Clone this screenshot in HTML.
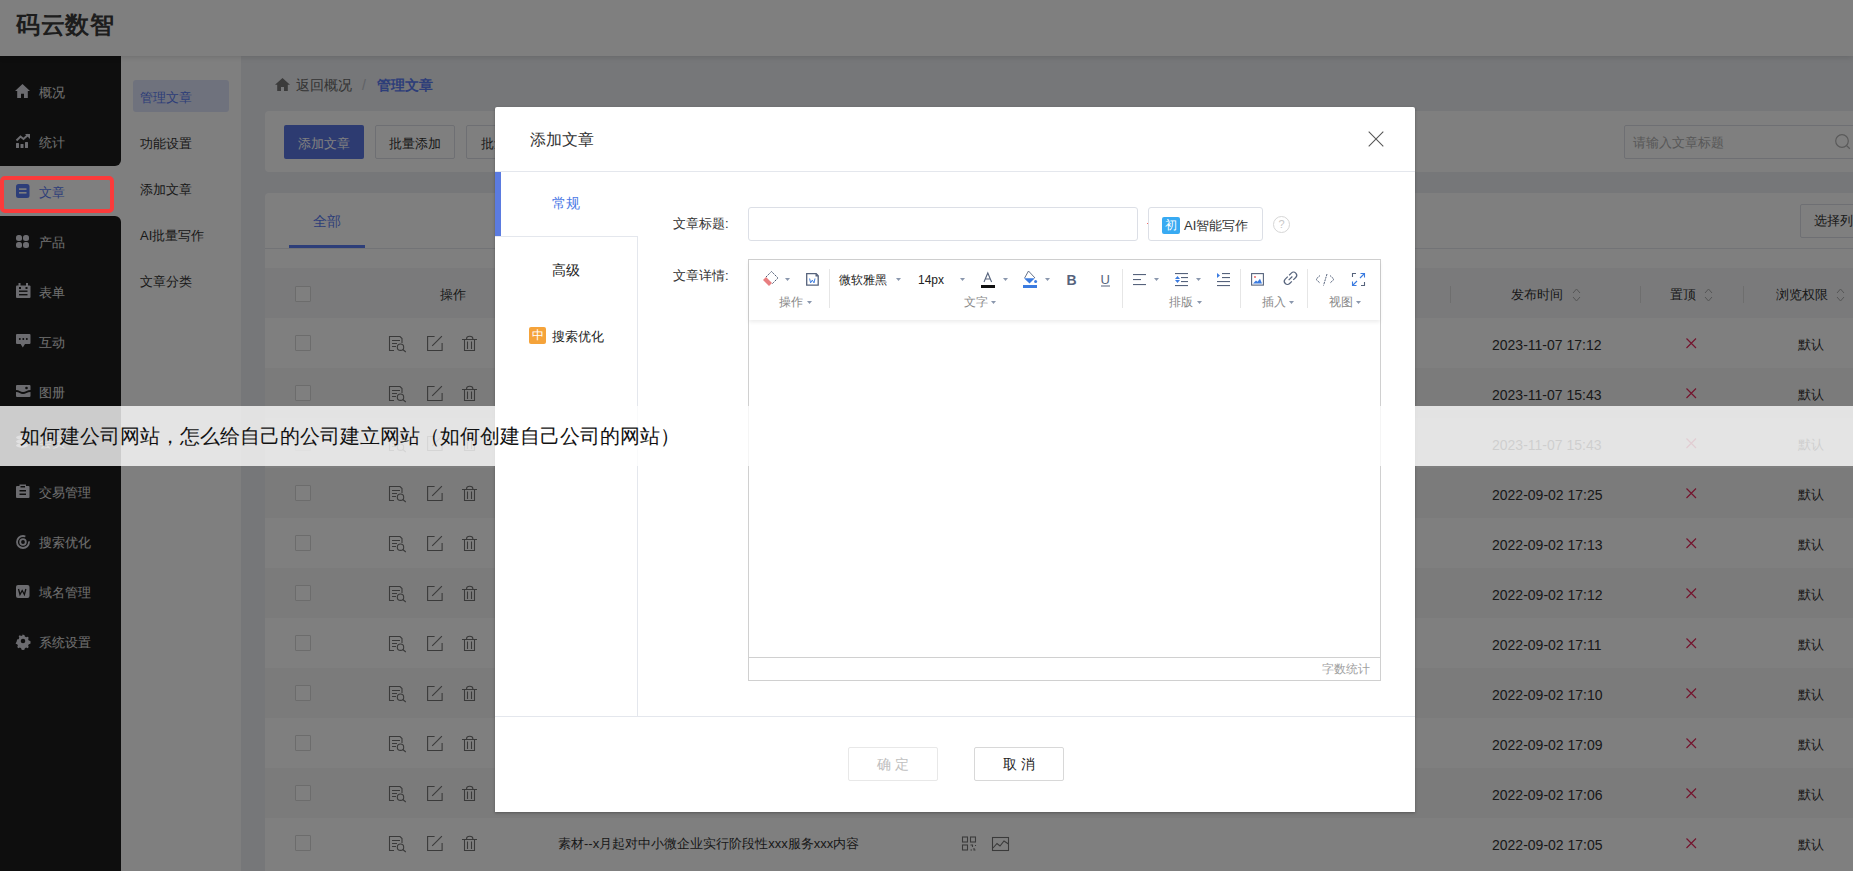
<!DOCTYPE html>
<html><head><meta charset="utf-8">
<style>
*{margin:0;padding:0;box-sizing:border-box}
html,body{width:1853px;height:871px;overflow:hidden}
body{position:relative;background:#eceef2;font-family:"Liberation Sans",sans-serif;color:#333;font-size:13px}
.a{position:absolute;white-space:nowrap}
#hdr{left:0;top:0;width:1853px;height:56px;background:#fff;box-shadow:0 1px 6px rgba(0,0,0,.14);z-index:2}
#hdr .t{left:16px;top:9px;font-size:24px;font-weight:bold;color:#3a3a3a;line-height:32px;letter-spacing:0.5px}
#sb{left:0;top:56px;width:121px;height:815px;background:#fff}
#sbA{left:0;top:56px;width:121px;height:110px;background:#1c1c1c;border-bottom-right-radius:6px}
#sbB{left:0;top:216px;width:121px;height:655px;background:#1c1c1c;border-top-right-radius:6px}
.si{left:39px;font-size:13px;color:#e6e6e6;line-height:20px}
.sic{left:16px;width:14px;height:14px}
#sb2{left:121px;top:56px;width:120px;height:815px;background:#fff}
.s2{left:140px;font-size:13px;color:#333;line-height:20px}
#card1{left:265px;top:111px;width:1620px;height:61px;background:#fff;border-radius:4px}
#card2{left:265px;top:193px;width:1620px;height:700px;background:#fff;border-radius:4px}
.btn{height:34px;border:1px solid #dcdfe6;border-radius:2px;background:#fff;font-size:13px;line-height:32px;text-align:center;color:#333}
#mask{z-index:3;left:0;top:0;width:1853px;height:871px;background:rgba(0,0,0,.5)}
#modal{z-index:3;left:495px;top:107px;width:920px;height:705px;background:#fff;border-radius:2px 2px 0 0;box-shadow:0 1px 3px rgba(0,0,0,.3)}
#banner{z-index:3;left:0;top:406px;width:1853px;height:60px;background:rgba(255,255,255,.79)}
#banner .t{left:20px;top:16px;font-size:20px;line-height:28px;color:#111;font-weight:500}
#redbox{z-index:3;left:0;top:176px;width:114px;height:37px;border:4px solid #fb3b3b;border-radius:5px}
</style></head>
<body>
<div id="hdr" class="a"><div class="a t">码云数智</div></div>
<div id="sb" class="a"></div>
<div id="sbA" class="a"></div>
<div id="sbB" class="a"></div>
<div id="sb2" class="a"></div>
<!--PAGE-->
<div class="a si" style="top:83px;color:#e0e0e0">概况</div>
<div class="a si" style="top:133px;color:#e0e0e0">统计</div>
<div class="a si" style="top:183px;color:#5b7cf2">文章</div>
<div class="a si" style="top:233px;color:#e0e0e0">产品</div>
<div class="a si" style="top:283px;color:#e0e0e0">表单</div>
<div class="a si" style="top:333px;color:#e0e0e0">互动</div>
<div class="a si" style="top:383px;color:#e0e0e0">图册</div>
<div class="a si" style="top:433px;color:#e0e0e0">会员</div>
<div class="a si" style="top:483px;color:#e0e0e0">交易管理</div>
<div class="a si" style="top:533px;color:#e0e0e0">搜索优化</div>
<div class="a si" style="top:583px;color:#e0e0e0">域名管理</div>
<div class="a si" style="top:633px;color:#e0e0e0">系统设置</div>
<svg class="a" style="left:0;top:0" width="121" height="871" viewBox="0 0 121 871"><path d="M22.5 84L15 91h2.2v7h3.8v-4.2h3v4.2h3.8v-7H30z" fill="#d8d8e0"/><g fill="#d8d8e0"><rect x="16" y="143" width="3" height="5" rx=".5"/><rect x="20.5" y="144" width="3" height="4" rx=".5"/><rect x="25" y="142" width="3" height="6" rx=".5"/></g><path d="M16.5 140.5l4-4l3 2.5l5-4.5" stroke="#d8d8e0" stroke-width="2" fill="none"/><path d="M25 134h5v5z" fill="#d8d8e0"/><rect x="16" y="184" width="13.5" height="14" rx="2.5" fill="#5b7cf2"/><g fill="#fff"><rect x="19" y="188.3" width="7.5" height="1.6"/><rect x="19" y="192" width="7.5" height="1.6"/></g><g fill="#d8d8e0"><rect x="16" y="235" width="6" height="6" rx="2.5"/><rect x="23" y="235" width="6" height="6" rx="2.5"/><rect x="16" y="242" width="6" height="6" rx="2.5"/><rect x="23" y="242" width="6" height="6" rx="2.5"/></g><path d="M17 285.5h12.5a1 1 0 0 1 1 1v10.5a1 1 0 0 1-1 1H17a1 1 0 0 1-1-1V286.5a1 1 0 0 1 1-1z" fill="#d8d8e0"/><g fill="#1c1c1c"><rect x="19" y="287" width="2" height="2"/><rect x="25.5" y="287" width="2" height="2"/><rect x="19" y="290.5" width="8.5" height="1.4"/><rect x="19" y="294" width="8.5" height="1.4"/></g><g fill="#d8d8e0"><rect x="18.5" y="283" width="2" height="3.5"/><rect x="26" y="283" width="2" height="3.5"/></g><path d="M17 334h12.5a1 1 0 0 1 1 1v8a1 1 0 0 1-1 1h-4.5l-2.2 3.5l-2.2-3.5H17a1 1 0 0 1-1-1v-8a1 1 0 0 1 1-1z" fill="#d8d8e0"/><g fill="#1c1c1c"><circle cx="19.8" cy="339" r="1"/><circle cx="23.3" cy="339" r="1"/><circle cx="26.8" cy="339" r="1"/></g><path d="M17 385h12.5a1 1 0 0 1 1 1v4c-3 0-5 2-7.5 2S19 390 16 390v-4a1 1 0 0 1 1-1zM16 392c3 0 4.5 2 7 2s4.5-2 7.5-2v4a1 1 0 0 1-1 1H17a1 1 0 0 1-1-1z" fill="#d8d8e0"/><circle cx="26.5" cy="388" r="1.3" fill="#1c1c1c"/><g fill="#d8d8e0"><ellipse cx="22" cy="437.5" rx="6" ry="2.2"/><ellipse cx="22" cy="441.5" rx="6" ry="2.2"/><ellipse cx="22" cy="445.5" rx="6" ry="2.2"/></g><path d="M17 486h2.5v-1.5h6.5v1.5h2.5a1 1 0 0 1 1 1v10a1 1 0 0 1-1 1H17a1 1 0 0 1-1-1v-10a1 1 0 0 1 1-1z" fill="#d8d8e0"/><g fill="#1c1c1c"><rect x="19.5" y="490" width="6.5" height="1.5"/><rect x="19.5" y="493.5" width="6.5" height="1.5"/><rect x="20.5" y="486" width="4.5" height="1.5"/></g><circle cx="23" cy="542" r="6" fill="none" stroke="#d8d8e0" stroke-width="1.8" stroke-dasharray="30 6"/><circle cx="23" cy="542" r="2.8" fill="none" stroke="#d8d8e0" stroke-width="1.8"/><rect x="16" y="585" width="13.5" height="13" rx="2" fill="#d8d8e0"/><path d="M18.5 589l1.5 5.5l2.2-4l2.2 4l1.5-5.5" stroke="#1c1c1c" stroke-width="1.3" fill="none"/><g transform="translate(23 641) scale(0.88) translate(-23 -642)"><path d="M23 635l1.6.2.5 1.8 1.5.8 1.7-.7 1.2 1.2-.7 1.7.8 1.5 1.8.5.2 1.6-.2 1.6-1.8.5-.8 1.5.7 1.7-1.2 1.2-1.7-.7-1.5.8-.5 1.8-1.6.2-1.6-.2-.5-1.8-1.5-.8-1.7.7-1.2-1.2.7-1.7-.8-1.5-1.8-.5L16 642l.2-1.6 1.8-.5.8-1.5-.7-1.7 1.2-1.2 1.7.7 1.5-.8.5-1.8z" fill="#d8d8e0"/><circle cx="23" cy="642" r="2.6" fill="#1c1c1c"/></g></svg>
<div class="a" style="left:133px;top:80px;width:96px;height:32px;background:#dfe5fa;border-radius:3px"></div>
<div class="a s2" style="top:88px;color:#5b7cf2">管理文章</div>
<div class="a s2" style="top:134px;color:#333">功能设置</div>
<div class="a s2" style="top:180px;color:#333">添加文章</div>
<div class="a s2" style="top:226px;color:#333">AI批量写作</div>
<div class="a s2" style="top:272px;color:#333">文章分类</div>
<svg class="a" style="left:275px;top:78px" width="15" height="13" viewBox="0 0 15 13"><path d="M7.5 0L0 6.8h2.2V13h3.8V9h3v4h3.8V6.8H15z" fill="#767676"/></svg>
<div class="a" style="left:296px;top:75px;font-size:14px;line-height:20px;color:#666">返回概况</div>
<div class="a" style="left:362px;top:75px;font-size:14px;line-height:20px;color:#c0c4cc">/</div>
<div class="a" style="left:377px;top:75px;font-size:14px;line-height:20px;color:#5b7cf2;font-weight:bold">管理文章</div>
<div id="card1" class="a"></div><div id="card2" class="a"></div>
<div class="a" style="left:284px;top:125px;width:80px;height:34px;background:#5a76e2;border-radius:2px;color:#fff;font-size:13px;line-height:34px;padding-top:2px;text-align:center">添加文章</div>
<div class="a btn" style="left:375px;top:125px;width:80px;padding-top:2px">批量添加</div>
<div class="a btn" style="left:466px;top:125px;width:100px;padding-top:2px;padding-left:14px;text-align:left">批量删除</div>
<div class="a" style="left:1624px;top:125px;width:260px;height:34px;border:1px solid #dcdfe6;border-radius:2px;background:#fff"></div>
<div class="a" style="left:1633px;top:134px;font-size:13px;line-height:18px;color:#b0b0b0">请输入文章标题</div>
<svg class="a" style="left:1834px;top:133px" width="20" height="20" viewBox="0 0 20 20"><circle cx="8" cy="8" r="6.3" fill="none" stroke="#b4b4b4" stroke-width="1.2"/><path d="M12.6 12.6l3.2 3.2" stroke="#b4b4b4" stroke-width="1.3"/></svg>
<div class="a" style="left:313px;top:211px;font-size:14px;line-height:20px;color:#5b7cf2">全部</div>
<div class="a" style="left:265px;top:248px;width:1620px;height:1px;background:#e4e7ed"></div>
<div class="a" style="left:289px;top:245px;width:76px;height:3px;background:#5b7cf2"></div>
<div class="a btn" style="left:1800px;top:204px;width:80px;text-align:left;padding-left:13px">选择列</div>
<div class="a" style="left:265px;top:268px;width:1620px;height:50px;background:#f4f5f7"></div>
<div class="a" style="left:295px;top:286px;width:16px;height:16px;border:1px solid #d8d8d8;border-radius:1px;background:#fff"></div>
<div class="a" style="left:440px;top:285px;font-size:13px;line-height:20px;color:#333">操作</div>
<div class="a" style="left:1450px;top:286px;width:1px;height:17px;background:#dcdcdc"></div>
<div class="a" style="left:1640px;top:286px;width:1px;height:17px;background:#dcdcdc"></div>
<div class="a" style="left:1743px;top:286px;width:1px;height:17px;background:#dcdcdc"></div>
<div class="a" style="left:1511px;top:285px;font-size:13px;line-height:20px;color:#333">发布时间</div><svg class="a" style="left:1572px;top:288px" width="9" height="14" viewBox="0 0 9 14"><path d="M1 5l3.5-4l3.5 4M1 9l3.5 4l3.5-4" fill="none" stroke="#aaa" stroke-width="1"/></svg>
<div class="a" style="left:1670px;top:285px;font-size:13px;line-height:20px;color:#333">置顶</div><svg class="a" style="left:1704px;top:288px" width="9" height="14" viewBox="0 0 9 14"><path d="M1 5l3.5-4l3.5 4M1 9l3.5 4l3.5-4" fill="none" stroke="#aaa" stroke-width="1"/></svg>
<div class="a" style="left:1776px;top:285px;font-size:13px;line-height:20px;color:#333">浏览权限</div><svg class="a" style="left:1836px;top:288px" width="9" height="14" viewBox="0 0 9 14"><path d="M1 5l3.5-4l3.5 4M1 9l3.5 4l3.5-4" fill="none" stroke="#aaa" stroke-width="1"/></svg>
<div class="a" style="left:265px;top:318px;width:1620px;height:50px;background:#fff"></div>
<div class="a" style="left:295px;top:335px;width:16px;height:16px;border:1px solid #d8d8d8;border-radius:1px;background:#fff"></div>
<div class="a" style="left:1492px;top:335px;font-size:14px;line-height:20px;color:#333">2023-11-07 17:12</div>
<div class="a" style="left:1798px;top:335px;font-size:13px;line-height:20px;color:#333">默认</div>
<div class="a" style="left:265px;top:368px;width:1620px;height:50px;background:#f7f7f7"></div>
<div class="a" style="left:295px;top:385px;width:16px;height:16px;border:1px solid #d8d8d8;border-radius:1px;background:#fff"></div>
<div class="a" style="left:1492px;top:385px;font-size:14px;line-height:20px;color:#333">2023-11-07 15:43</div>
<div class="a" style="left:1798px;top:385px;font-size:13px;line-height:20px;color:#333">默认</div>
<div class="a" style="left:265px;top:418px;width:1620px;height:50px;background:#fff"></div>
<div class="a" style="left:295px;top:435px;width:16px;height:16px;border:1px solid #d8d8d8;border-radius:1px;background:#fff"></div>
<div class="a" style="left:1492px;top:435px;font-size:14px;line-height:20px;color:#333">2023-11-07 15:43</div>
<div class="a" style="left:1798px;top:435px;font-size:13px;line-height:20px;color:#333">默认</div>
<div class="a" style="left:265px;top:468px;width:1620px;height:50px;background:#f7f7f7"></div>
<div class="a" style="left:295px;top:485px;width:16px;height:16px;border:1px solid #d8d8d8;border-radius:1px;background:#fff"></div>
<div class="a" style="left:1492px;top:485px;font-size:14px;line-height:20px;color:#333">2022-09-02 17:25</div>
<div class="a" style="left:1798px;top:485px;font-size:13px;line-height:20px;color:#333">默认</div>
<div class="a" style="left:265px;top:518px;width:1620px;height:50px;background:#fff"></div>
<div class="a" style="left:295px;top:535px;width:16px;height:16px;border:1px solid #d8d8d8;border-radius:1px;background:#fff"></div>
<div class="a" style="left:1492px;top:535px;font-size:14px;line-height:20px;color:#333">2022-09-02 17:13</div>
<div class="a" style="left:1798px;top:535px;font-size:13px;line-height:20px;color:#333">默认</div>
<div class="a" style="left:265px;top:568px;width:1620px;height:50px;background:#f7f7f7"></div>
<div class="a" style="left:295px;top:585px;width:16px;height:16px;border:1px solid #d8d8d8;border-radius:1px;background:#fff"></div>
<div class="a" style="left:1492px;top:585px;font-size:14px;line-height:20px;color:#333">2022-09-02 17:12</div>
<div class="a" style="left:1798px;top:585px;font-size:13px;line-height:20px;color:#333">默认</div>
<div class="a" style="left:265px;top:618px;width:1620px;height:50px;background:#fff"></div>
<div class="a" style="left:295px;top:635px;width:16px;height:16px;border:1px solid #d8d8d8;border-radius:1px;background:#fff"></div>
<div class="a" style="left:1492px;top:635px;font-size:14px;line-height:20px;color:#333">2022-09-02 17:11</div>
<div class="a" style="left:1798px;top:635px;font-size:13px;line-height:20px;color:#333">默认</div>
<div class="a" style="left:265px;top:668px;width:1620px;height:50px;background:#f7f7f7"></div>
<div class="a" style="left:295px;top:685px;width:16px;height:16px;border:1px solid #d8d8d8;border-radius:1px;background:#fff"></div>
<div class="a" style="left:1492px;top:685px;font-size:14px;line-height:20px;color:#333">2022-09-02 17:10</div>
<div class="a" style="left:1798px;top:685px;font-size:13px;line-height:20px;color:#333">默认</div>
<div class="a" style="left:265px;top:718px;width:1620px;height:50px;background:#fff"></div>
<div class="a" style="left:295px;top:735px;width:16px;height:16px;border:1px solid #d8d8d8;border-radius:1px;background:#fff"></div>
<div class="a" style="left:1492px;top:735px;font-size:14px;line-height:20px;color:#333">2022-09-02 17:09</div>
<div class="a" style="left:1798px;top:735px;font-size:13px;line-height:20px;color:#333">默认</div>
<div class="a" style="left:265px;top:768px;width:1620px;height:50px;background:#f7f7f7"></div>
<div class="a" style="left:295px;top:785px;width:16px;height:16px;border:1px solid #d8d8d8;border-radius:1px;background:#fff"></div>
<div class="a" style="left:1492px;top:785px;font-size:14px;line-height:20px;color:#333">2022-09-02 17:06</div>
<div class="a" style="left:1798px;top:785px;font-size:13px;line-height:20px;color:#333">默认</div>
<div class="a" style="left:265px;top:818px;width:1620px;height:50px;background:#fff"></div>
<div class="a" style="left:295px;top:835px;width:16px;height:16px;border:1px solid #d8d8d8;border-radius:1px;background:#fff"></div>
<div class="a" style="left:1492px;top:835px;font-size:14px;line-height:20px;color:#333">2022-09-02 17:05</div>
<div class="a" style="left:1798px;top:835px;font-size:13px;line-height:20px;color:#333">默认</div>
<div class="a" style="left:558px;top:834px;font-size:13px;line-height:20px;color:#333">素材--x月起对中小微企业实行阶段性xxx服务xxx内容</div>
<svg class="a" style="left:0;top:0" width="1853" height="871" viewBox="0 0 1853 871"><g fill="none" stroke="#747474" stroke-width="1.1" transform="translate(0,-500)"><path d="M394 850.5h-4.5v-14h10.5l2 2v4.5"/><path d="M392 840.5h8M392 843.5h5M392 846.5h4"/><circle cx="400.5" cy="847.2" r="3.2"/><path d="M402.8 849.5l3 2.5"/><path d="M434.6 836.5h-7v14h14.5v-7.5"/><path d="M432.2 845.8l9.7-9.6"/><path d="M462 839.5h15M464.5 839.5v11h10v-11M467.5 841.5v7.5M471.5 841.5v7.5M466.5 839c0-2 1-2.7 3.2-2.7s3.2.7 3.2 2.7"/></g><path d="M1686.5 338.5l9.5 9.5M1696 338.5l-9.5 9.5" stroke="#e8285c" stroke-width="1.2"/><g fill="none" stroke="#747474" stroke-width="1.1" transform="translate(0,-450)"><path d="M394 850.5h-4.5v-14h10.5l2 2v4.5"/><path d="M392 840.5h8M392 843.5h5M392 846.5h4"/><circle cx="400.5" cy="847.2" r="3.2"/><path d="M402.8 849.5l3 2.5"/><path d="M434.6 836.5h-7v14h14.5v-7.5"/><path d="M432.2 845.8l9.7-9.6"/><path d="M462 839.5h15M464.5 839.5v11h10v-11M467.5 841.5v7.5M471.5 841.5v7.5M466.5 839c0-2 1-2.7 3.2-2.7s3.2.7 3.2 2.7"/></g><path d="M1686.5 388.5l9.5 9.5M1696 388.5l-9.5 9.5" stroke="#e8285c" stroke-width="1.2"/><g fill="none" stroke="#747474" stroke-width="1.1" transform="translate(0,-400)"><path d="M394 850.5h-4.5v-14h10.5l2 2v4.5"/><path d="M392 840.5h8M392 843.5h5M392 846.5h4"/><circle cx="400.5" cy="847.2" r="3.2"/><path d="M402.8 849.5l3 2.5"/><path d="M434.6 836.5h-7v14h14.5v-7.5"/><path d="M432.2 845.8l9.7-9.6"/><path d="M462 839.5h15M464.5 839.5v11h10v-11M467.5 841.5v7.5M471.5 841.5v7.5M466.5 839c0-2 1-2.7 3.2-2.7s3.2.7 3.2 2.7"/></g><path d="M1686.5 438.5l9.5 9.5M1696 438.5l-9.5 9.5" stroke="#e8285c" stroke-width="1.2"/><g fill="none" stroke="#747474" stroke-width="1.1" transform="translate(0,-350)"><path d="M394 850.5h-4.5v-14h10.5l2 2v4.5"/><path d="M392 840.5h8M392 843.5h5M392 846.5h4"/><circle cx="400.5" cy="847.2" r="3.2"/><path d="M402.8 849.5l3 2.5"/><path d="M434.6 836.5h-7v14h14.5v-7.5"/><path d="M432.2 845.8l9.7-9.6"/><path d="M462 839.5h15M464.5 839.5v11h10v-11M467.5 841.5v7.5M471.5 841.5v7.5M466.5 839c0-2 1-2.7 3.2-2.7s3.2.7 3.2 2.7"/></g><path d="M1686.5 488.5l9.5 9.5M1696 488.5l-9.5 9.5" stroke="#e8285c" stroke-width="1.2"/><g fill="none" stroke="#747474" stroke-width="1.1" transform="translate(0,-300)"><path d="M394 850.5h-4.5v-14h10.5l2 2v4.5"/><path d="M392 840.5h8M392 843.5h5M392 846.5h4"/><circle cx="400.5" cy="847.2" r="3.2"/><path d="M402.8 849.5l3 2.5"/><path d="M434.6 836.5h-7v14h14.5v-7.5"/><path d="M432.2 845.8l9.7-9.6"/><path d="M462 839.5h15M464.5 839.5v11h10v-11M467.5 841.5v7.5M471.5 841.5v7.5M466.5 839c0-2 1-2.7 3.2-2.7s3.2.7 3.2 2.7"/></g><path d="M1686.5 538.5l9.5 9.5M1696 538.5l-9.5 9.5" stroke="#e8285c" stroke-width="1.2"/><g fill="none" stroke="#747474" stroke-width="1.1" transform="translate(0,-250)"><path d="M394 850.5h-4.5v-14h10.5l2 2v4.5"/><path d="M392 840.5h8M392 843.5h5M392 846.5h4"/><circle cx="400.5" cy="847.2" r="3.2"/><path d="M402.8 849.5l3 2.5"/><path d="M434.6 836.5h-7v14h14.5v-7.5"/><path d="M432.2 845.8l9.7-9.6"/><path d="M462 839.5h15M464.5 839.5v11h10v-11M467.5 841.5v7.5M471.5 841.5v7.5M466.5 839c0-2 1-2.7 3.2-2.7s3.2.7 3.2 2.7"/></g><path d="M1686.5 588.5l9.5 9.5M1696 588.5l-9.5 9.5" stroke="#e8285c" stroke-width="1.2"/><g fill="none" stroke="#747474" stroke-width="1.1" transform="translate(0,-200)"><path d="M394 850.5h-4.5v-14h10.5l2 2v4.5"/><path d="M392 840.5h8M392 843.5h5M392 846.5h4"/><circle cx="400.5" cy="847.2" r="3.2"/><path d="M402.8 849.5l3 2.5"/><path d="M434.6 836.5h-7v14h14.5v-7.5"/><path d="M432.2 845.8l9.7-9.6"/><path d="M462 839.5h15M464.5 839.5v11h10v-11M467.5 841.5v7.5M471.5 841.5v7.5M466.5 839c0-2 1-2.7 3.2-2.7s3.2.7 3.2 2.7"/></g><path d="M1686.5 638.5l9.5 9.5M1696 638.5l-9.5 9.5" stroke="#e8285c" stroke-width="1.2"/><g fill="none" stroke="#747474" stroke-width="1.1" transform="translate(0,-150)"><path d="M394 850.5h-4.5v-14h10.5l2 2v4.5"/><path d="M392 840.5h8M392 843.5h5M392 846.5h4"/><circle cx="400.5" cy="847.2" r="3.2"/><path d="M402.8 849.5l3 2.5"/><path d="M434.6 836.5h-7v14h14.5v-7.5"/><path d="M432.2 845.8l9.7-9.6"/><path d="M462 839.5h15M464.5 839.5v11h10v-11M467.5 841.5v7.5M471.5 841.5v7.5M466.5 839c0-2 1-2.7 3.2-2.7s3.2.7 3.2 2.7"/></g><path d="M1686.5 688.5l9.5 9.5M1696 688.5l-9.5 9.5" stroke="#e8285c" stroke-width="1.2"/><g fill="none" stroke="#747474" stroke-width="1.1" transform="translate(0,-100)"><path d="M394 850.5h-4.5v-14h10.5l2 2v4.5"/><path d="M392 840.5h8M392 843.5h5M392 846.5h4"/><circle cx="400.5" cy="847.2" r="3.2"/><path d="M402.8 849.5l3 2.5"/><path d="M434.6 836.5h-7v14h14.5v-7.5"/><path d="M432.2 845.8l9.7-9.6"/><path d="M462 839.5h15M464.5 839.5v11h10v-11M467.5 841.5v7.5M471.5 841.5v7.5M466.5 839c0-2 1-2.7 3.2-2.7s3.2.7 3.2 2.7"/></g><path d="M1686.5 738.5l9.5 9.5M1696 738.5l-9.5 9.5" stroke="#e8285c" stroke-width="1.2"/><g fill="none" stroke="#747474" stroke-width="1.1" transform="translate(0,-50)"><path d="M394 850.5h-4.5v-14h10.5l2 2v4.5"/><path d="M392 840.5h8M392 843.5h5M392 846.5h4"/><circle cx="400.5" cy="847.2" r="3.2"/><path d="M402.8 849.5l3 2.5"/><path d="M434.6 836.5h-7v14h14.5v-7.5"/><path d="M432.2 845.8l9.7-9.6"/><path d="M462 839.5h15M464.5 839.5v11h10v-11M467.5 841.5v7.5M471.5 841.5v7.5M466.5 839c0-2 1-2.7 3.2-2.7s3.2.7 3.2 2.7"/></g><path d="M1686.5 788.5l9.5 9.5M1696 788.5l-9.5 9.5" stroke="#e8285c" stroke-width="1.2"/><g fill="none" stroke="#747474" stroke-width="1.1" transform="translate(0,0)"><path d="M394 850.5h-4.5v-14h10.5l2 2v4.5"/><path d="M392 840.5h8M392 843.5h5M392 846.5h4"/><circle cx="400.5" cy="847.2" r="3.2"/><path d="M402.8 849.5l3 2.5"/><path d="M434.6 836.5h-7v14h14.5v-7.5"/><path d="M432.2 845.8l9.7-9.6"/><path d="M462 839.5h15M464.5 839.5v11h10v-11M467.5 841.5v7.5M471.5 841.5v7.5M466.5 839c0-2 1-2.7 3.2-2.7s3.2.7 3.2 2.7"/></g><path d="M1686.5 838.5l9.5 9.5M1696 838.5l-9.5 9.5" stroke="#e8285c" stroke-width="1.2"/><g fill="none" stroke="#747474" stroke-width="1.1"><rect x="962.5" y="837" width="5" height="5"/><rect x="970.5" y="837" width="5" height="5"/><rect x="962.5" y="845" width="5" height="5"/><path d="M970.5 845h2v2M975.5 845v1M970.5 850h1.5M974 848v2h1.5"/><rect x="992.5" y="837.5" width="16" height="13"/><path d="M993 848l4-4.5l3 2.5l4-5l4.5 3"/></g></svg>
<!--/PAGE-->

<div id="mask" class="a"></div>
<div id="modal" class="a"></div>
<div id="mc" style="position:absolute;left:0;top:0;z-index:3">
<div class="a" style="left:530px;top:129px;font-size:16px;line-height:22px;color:#333">添加文章</div>
<svg class="a" style="left:1368px;top:131px" width="16" height="16" viewBox="0 0 16 16"><path d="M0.7 0.7L15.3 15.3M15.3 0.7L0.7 15.3" stroke="#555" stroke-width="1.05" fill="none"/></svg>
<div class="a" style="left:495px;top:171px;width:920px;height:1px;background:#e4e7ed"></div>
<div class="a" style="left:495px;top:172px;width:6px;height:64px;background:#5b7be0"></div>
<div class="a" style="left:552px;top:194px;font-size:13.5px;line-height:20px;color:#4c7ae6">常规</div>
<div class="a" style="left:495px;top:236px;width:143px;height:1px;background:#e4e7ed"></div>
<div class="a" style="left:637px;top:236px;width:1px;height:480px;background:#e4e7ed"></div>
<div class="a" style="left:552px;top:261px;font-size:13.5px;line-height:20px;color:#222">高级</div>
<div class="a" style="left:529px;top:327px;width:17px;height:17px;background:#f5a33a;border-radius:2px;color:#fff;font-size:12px;line-height:17px;text-align:center">中</div>
<div class="a" style="left:552px;top:327px;font-size:13px;line-height:20px;color:#222">搜索优化</div>
<div class="a" style="left:495px;top:716px;width:920px;height:1px;background:#e4e7ed"></div>
<div class="a btn" style="left:848px;top:747px;width:90px;height:34px;border-color:#e8e8e8;color:#c0c0c0;font-size:14px;letter-spacing:4px;padding-left:4px">确定</div>
<div class="a btn" style="left:974px;top:747px;width:90px;height:34px;border-color:#d8d8d8;color:#222;font-size:14px;letter-spacing:4px;padding-left:4px">取消</div>
<div class="a" style="left:673px;top:214px;font-size:13px;line-height:20px;color:#333">文章标题:</div>
<div class="a" style="left:748px;top:207px;width:390px;height:34px;border:1px solid #dcdfe6;border-radius:3px"></div>
<div class="a" style="left:1147px;top:223px;width:1px;height:1px;background:#f56c6c"></div>
<div class="a" style="left:1148px;top:207px;width:115px;height:34px;border:1px solid #dcdfe6;border-radius:3px"></div>
<div class="a" style="left:1162px;top:217px;width:18px;height:17px;background:#38aaf2;border-radius:2px;color:#fff;font-size:12px;line-height:17px;text-align:center">初</div>
<div class="a" style="left:1184px;top:216px;font-size:13px;line-height:20px;color:#333">AI智能写作</div>
<div class="a" style="left:1273px;top:216px;width:17px;height:17px;border:1px solid #d6d6d6;border-radius:50%;color:#c8c8c8;font-size:11px;line-height:15px;text-align:center">?</div>
<div class="a" style="left:673px;top:266px;font-size:13px;line-height:20px;color:#333">文章详情:</div>
<div class="a" style="left:748px;top:259px;width:633px;height:422px;border:1px solid #d0d0d0"></div>
<div class="a" style="left:749px;top:260px;width:631px;height:60px;background:#fff;box-shadow:0 2px 4px rgba(0,0,0,.08)"></div>
<div class="a" style="left:749px;top:657px;width:631px;height:1px;background:#d0d0d0"></div>
<div class="a" style="left:1322px;top:661px;font-size:12px;line-height:16px;color:#a0a0a0">字数统计</div>
<svg class="a" style="left:0;top:0" width="1853" height="871" viewBox="0 0 1853 871">
<g fill="none" stroke="#4e5b74" stroke-width="1">
<path d="M771.5 271.5L778 278L772 284M766 277L771.5 271.5" stroke-dasharray="1.6 0.8"/>
</g>
<path d="M763 280L766 277L772 283L769 286Z" fill="#e87e80"/>
<g fill="#8a97ad">
<path d="M785 278h5l-2.5 3z"/><path d="M807 301h5l-2.5 3z"/>
<path d="M896 278h5l-2.5 3z"/><path d="M960 278h5l-2.5 3z"/>
<path d="M1003 278h5l-2.5 3z"/><path d="M1045 278h5l-2.5 3z"/>
<path d="M991 301h5l-2.5 3z"/>
<path d="M1154 278h5l-2.5 3z"/><path d="M1196 278h5l-2.5 3z"/>
<path d="M1197 301h5l-2.5 3z"/><path d="M1289 301h5l-2.5 3z"/><path d="M1356 301h5l-2.5 3z"/>
</g>
<path d="M806.7 273.6h9.5l2 2.2v9.4h-11.5z" fill="none" stroke="#56637c" stroke-width="1.3"/>
<path d="M815.5 273.2l3.2 3.2h-3.2z" fill="#56637c"/>
<path d="M809.6 278.5l1 4.4l1.7-2.8l1.7 2.8l1-4.4" fill="none" stroke="#3f7fe0" stroke-width="1"/>
<g fill="#e6e6e6"><rect x="829" y="269" width="1" height="39"/><rect x="1122" y="269" width="1" height="39"/><rect x="1240" y="269" width="1" height="39"/><rect x="1307" y="269" width="1" height="39"/></g>
<path d="M984 282L987.8 273L991.6 282M985.3 279h5" fill="none" stroke="#56637c" stroke-width="1.1"/>
<rect x="981" y="285" width="14" height="3" fill="#111"/>
<path d="M1028.5 271L1035 278M1028.5 271L1024.6 278" fill="none" stroke="#56637c" stroke-width="0.9"/>
<path d="M1024 278.2h10.8l-5.3 5.3z" fill="#3b7be0"/>
<circle cx="1035.6" cy="281.4" r="1.5" fill="#3b7be0"/>
<rect x="1023" y="285" width="14" height="3" fill="#3b7be0"/>
<text x="1066.5" y="285" font-family="Liberation Sans" font-weight="bold" font-size="14" fill="#56637c">B</text>
<text x="1100.5" y="284" font-family="Liberation Sans" font-size="13" fill="#56637c">U</text>
<rect x="1101" y="285.5" width="9" height="1" fill="#56637c"/>
<g fill="#56637c"><rect x="1133" y="274" width="13" height="1.1"/><rect x="1133" y="279" width="8" height="1.1"/><rect x="1133" y="284" width="13" height="1.1"/>
<rect x="1175" y="273" width="13" height="1.1"/><rect x="1181" y="277" width="7" height="1.1"/><rect x="1181" y="281" width="7" height="1.1"/><rect x="1175" y="285" width="13" height="1.1"/>
<rect x="1222" y="273" width="8" height="1.1"/><rect x="1222" y="277" width="8" height="1.1"/><rect x="1217" y="281" width="13" height="1.1"/><rect x="1217" y="285" width="13" height="1.1"/></g>
<g fill="#3b7be0"><path d="M1175 279h5l-2.5-3z"/><path d="M1175 280h5l-2.5 3z"/><path d="M1217 273v5l3-2.5z"/></g>
<rect x="1251.6" y="273.6" width="11.8" height="11.5" fill="none" stroke="#56637c" stroke-width="1.1"/>
<circle cx="1255" cy="277" r="0.9" fill="#e85a5a"/>
<path d="M1253 283.5l3-3l1.5 1.2l2.5-3l2 4.8z" fill="#3b7be0"/>
<g transform="translate(1290.5 278.3) rotate(-45)"><path d="M-0.8 -3.1H-4.3A3.1 3.1 0 0 0 -4.3 3.1H-1.2M0.8 3.1H4.3A3.1 3.1 0 0 0 4.3 -3.1H1.2M-2.6 0H2.6" fill="none" stroke="#56637c" stroke-width="1.2"/></g>
<path d="M1320 275.5l-4 3.8l4 3.8M1330 275.5l4 3.8l-4 3.8M1327 274l-3.5 11.5" fill="none" stroke="#56637c" stroke-width="1" stroke-dasharray="2 0.8"/>
<path d="M1352.5 277v-3.5h3.5M1364.5 282v3.5h-3.5" fill="none" stroke="#56637c" stroke-width="1.1"/>
<path d="M1360.5 273.5h4v4M1364.5 273.5l-4.5 4.5M1356.5 285.5h-4v-4M1352.5 285.5l4.5-4.5" fill="none" stroke="#3b7be0" stroke-width="1.1"/>
</svg>
<div class="a" style="left:779px;top:294px;font-size:12px;line-height:16px;color:#888">操作</div>
<div class="a" style="left:964px;top:294px;font-size:12px;line-height:16px;color:#888">文字</div>
<div class="a" style="left:1169px;top:294px;font-size:12px;line-height:16px;color:#888">排版</div>
<div class="a" style="left:1262px;top:294px;font-size:12px;line-height:16px;color:#888">插入</div>
<div class="a" style="left:1329px;top:294px;font-size:12px;line-height:16px;color:#888">视图</div>
<div class="a" style="left:839px;top:272px;font-size:12px;line-height:16px;color:#222">微软雅黑</div>
<div class="a" style="left:918px;top:272px;font-size:12px;line-height:16px;color:#222">14px</div>

</div>
<div id="banner" class="a"><div class="a t">如何建公司网站，怎么给自己的公司建立网站（如何创建自己公司的网站）</div></div>
<div id="redbox" class="a"></div>
</body></html>
